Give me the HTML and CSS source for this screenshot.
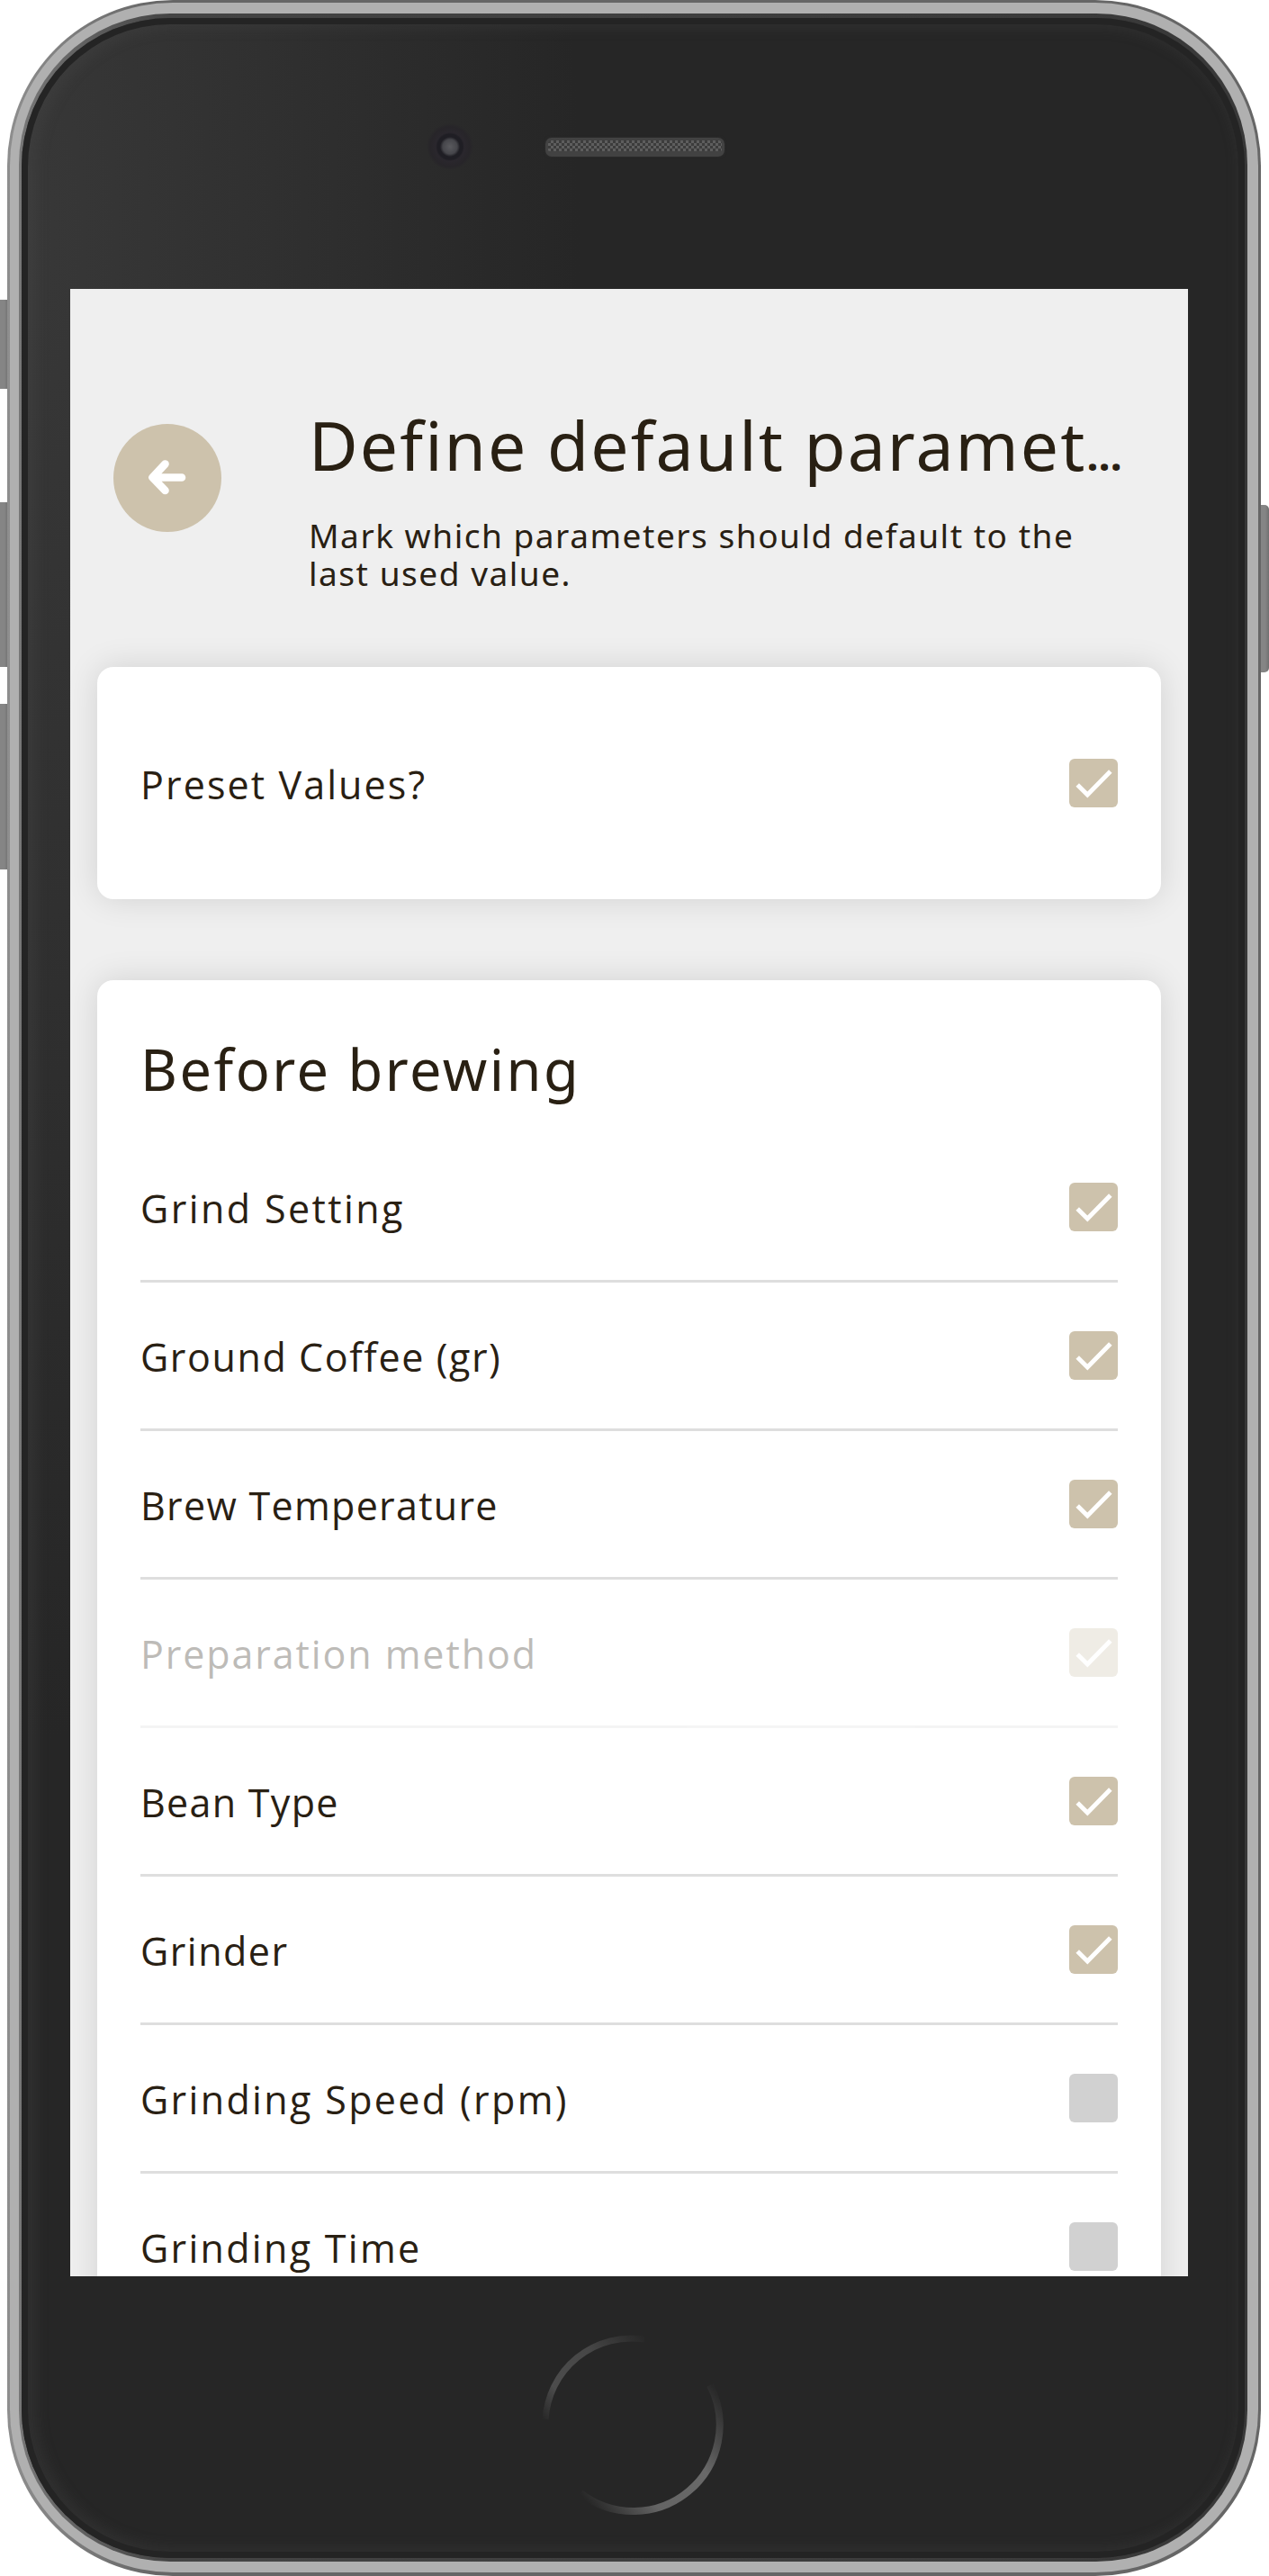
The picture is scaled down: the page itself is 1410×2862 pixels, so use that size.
FILE: index.html
```html
<!DOCTYPE html>
<html lang="en">
<head>
<meta charset="utf-8">
<title>Define default parameters</title>
<link rel="stylesheet" href="styles.css">
</head>
<body>
<div class="device">
  <span class="key key-mute"></span>
  <span class="key key-up"></span>
  <span class="key key-down"></span>
  <span class="key key-power"></span>
  <div class="rim">
    <div class="metal">
      <div class="inner-rim">
        <div class="glass"></div>
      </div>
    </div>
  </div>
  <span class="camera"></span>
  <span class="speaker"></span>
  <main class="screen">
    <header class="header">
      <button class="back" aria-label="Back">
        <svg width="120" height="120" viewBox="0 0 120 120" fill="none" stroke="#fff" stroke-width="8.6" stroke-linecap="round" stroke-linejoin="round"><path d="M57.5 44.5 43.5 59.5 57.5 74M44 59.5H76"/></svg>
      </button>
      <div class="heading">
        <h1 class="title">Define default paramet<span class="dots">…</span></h1>
        <p class="subtitle">Mark which parameters should default to the<br>last used value.</p>
      </div>
    </header>
    <section class="card preset">
      <div class="row last"><span class="t-preset">Preset Values?</span><i class="box on"><svg viewBox="0 0 54 54"><path d="M9.2 29 20.3 40 45.8 14"/></svg></i></div>
    </section>
    <section class="card">
      <h2 class="group">Before brewing</h2>
      <div class="row"><span class="t-setting">Grind Setting</span><i class="box on"><svg viewBox="0 0 54 54"><path d="M9.2 29 20.3 40 45.8 14"/></svg></i></div>
      <div class="row"><span class="t-coffee">Ground Coffee (gr)</span><i class="box on"><svg viewBox="0 0 54 54"><path d="M9.2 29 20.3 40 45.8 14"/></svg></i></div>
      <div class="row"><span class="t-temp">Brew Temperature</span><i class="box on"><svg viewBox="0 0 54 54"><path d="M9.2 29 20.3 40 45.8 14"/></svg></i></div>
      <div class="row disabled"><span class="t-method">Preparation method</span><i class="box on"><svg viewBox="0 0 54 54"><path d="M9.2 29 20.3 40 45.8 14"/></svg></i></div>
      <div class="row"><span class="t-bean">Bean Type</span><i class="box on"><svg viewBox="0 0 54 54"><path d="M9.2 29 20.3 40 45.8 14"/></svg></i></div>
      <div class="row"><span class="t-grinder">Grinder</span><i class="box on"><svg viewBox="0 0 54 54"><path d="M9.2 29 20.3 40 45.8 14"/></svg></i></div>
      <div class="row"><span class="t-speed">Grinding Speed (rpm)</span><i class="box"></i></div>
      <div class="row"><span class="t-time">Grinding Time</span><i class="box"></i></div>
    </section>
  </main>
  <svg class="home" width="220" height="220" viewBox="596 2584 220 220" fill="none" stroke-linecap="butt">
    <defs>
      <linearGradient id="arcTop" gradientUnits="userSpaceOnUse" x1="609" y1="2692" x2="722" y2="2597">
        <stop offset="0" stop-color="#262626"/><stop offset=".22" stop-color="#4c4c4c"/><stop offset=".6" stop-color="#474747"/><stop offset="1" stop-color="#262626"/>
      </linearGradient>
      <linearGradient id="arcBottom" gradientUnits="userSpaceOnUse" x1="650" y1="2774" x2="797" y2="2654">
        <stop offset="0" stop-color="#262626"/><stop offset=".3" stop-color="#646464"/><stop offset=".65" stop-color="#696969"/><stop offset="1" stop-color="#282828"/>
      </linearGradient>
    </defs>
    <path d="M612 2692A96 96 0 0 1 722 2603" stroke="url(#arcTop)" stroke-width="7"/>
    <path d="M651 2774A96 96 0 0 0 795 2654" stroke="url(#arcBottom)" stroke-width="8"/>
  </svg>
</div>
</body>
</html>
```
FILE: styles.css
```css
* { box-sizing: border-box; margin: 0; }
body { background: #fff; color: #292013; }

.device {
  position: relative;
  width: 1410px;
  height: 2862px;
  overflow: hidden;
  padding: 321px 90px 333px 78px;
}

/* phone body */
.rim {
  position: absolute;
  inset: 0 9px 0 8px;
  padding: 3px 3px 4px;
  border-radius: 184px;
  background: linear-gradient(90deg, #8e8e8e, #666 12%);
}
.metal {
  height: 100%;
  padding: 12px 12px 12px 10px;
  border-radius: 181px;
  background: #b0b0b0;
}
.inner-rim {
  height: 100%;
  padding: 5px 3px 4px;
  border-radius: 168px;
  background: linear-gradient(90deg, #777, #444 12%, #383838);
}
.glass {
  height: 100%;
  border-radius: 165px;
  background:
    radial-gradient(1000px 2700px at 0 240px, #383838 0%, #303030 28%, #262626 62%);
  box-shadow: inset 0 0 0 7px #242424, inset 5px 0 14px 12px rgba(84, 84, 84, .22);
}

.key { position: absolute; background: linear-gradient(90deg, #858585 55%, #707070); }
.key-mute { left: 0; top: 333px; width: 9px; height: 99px; }
.key-up { left: 0; top: 558px; width: 9px; height: 183px; }
.key-down { left: 0; top: 782px; width: 9px; height: 184px; }
.key-power { right: 0; top: 561px; width: 9px; height: 186px; border-radius: 0 5px 5px 0; }

.camera {
  position: absolute;
  left: 474px;
  top: 136px;
  width: 52px;
  height: 52px;
  border-radius: 50%;
  background: radial-gradient(circle at 50% 52%, #5a5a5e 0, #46464b 8px, #1f1e24 11px, #1f1e24 14px, #2a272d 16px, #272529 22px, transparent 26px);
}
.speaker {
  position: absolute;
  left: 606px;
  top: 153px;
  width: 199px;
  height: 21px;
  border-radius: 7px;
  border: solid #424242;
  border-width: 3px 3px 6px;
  background: conic-gradient(#5e5e5e 25%, #3c3c3c 0 50%, #5e5e5e 0 75%, #3c3c3c 0) 0 0 / 6px 6px;
  box-shadow: 0 0 3px #303030;
}
.home { position: absolute; left: 590px; top: 2580px; }

/* app */
.screen {
  position: relative;
  height: 2208px;
  overflow: hidden;
  background: #efefef;
}
.header {
  display: flex;
  gap: 97px;
  height: 420px;
  padding: 128px 48px 0;
}
.back {
  flex: none;
  width: 120px;
  height: 120px;
  margin-top: 22px;
  padding: 0;
  border: 0;
  border-radius: 50%;
  background: #cdc2ac;
}
.back svg { display: block; }
.heading { font-family: "Noto Sans", sans-serif; white-space: nowrap; }
.title {
  height: 90px;
  font-size: 75px;
  font-weight: 400;
  line-height: 90px;
  letter-spacing: 2.1px;
}
.dots { font-size: 46px; font-weight: 700; line-height: 1; letter-spacing: 0; }
.subtitle {
  margin-top: 35px;
  font-size: 37px;
  line-height: 42px;
  letter-spacing: 1.53px;
}
.card {
  margin: 0 30px 90px;
  padding: 48px;
  border-radius: 18px;
  background: #fff;
  box-shadow: 0 0 36px rgba(0, 0, 0, .12);
}
.group {
  height: 123px;
  font: 400 63px/102px "Noto Sans", sans-serif;
  letter-spacing: 2.5px;
}
.row {
  display: flex;
  align-items: center;
  justify-content: space-between;
  height: 165px;
  border-bottom: 3px solid #dedede;
  font: 43px/1 "Open Sans", sans-serif;
  white-space: nowrap;
}
.row span { padding-top: 2px; }
.row.last { height: 162px; border: 0; }
.row.disabled { opacity: .3; }
.box {
  flex: none;
  width: 54px;
  height: 54px;
  border-radius: 6px;
  background: #d1d1d1;
}
.box.on { background: #cdc2ac; }
.box svg { display: block; fill: none; stroke: #fff; stroke-width: 5; }

.t-preset { letter-spacing: 2.1px; }
.t-setting { letter-spacing: 2.4px; }
.t-coffee { letter-spacing: 1.6px; }
.t-temp { letter-spacing: 1.3px; }
.t-method { letter-spacing: 1.9px; }
.t-bean { letter-spacing: 1.3px; }
.t-grinder { letter-spacing: 1.5px; }
.t-speed { letter-spacing: 2.35px; }
.t-time { letter-spacing: 2.3px; }
```
